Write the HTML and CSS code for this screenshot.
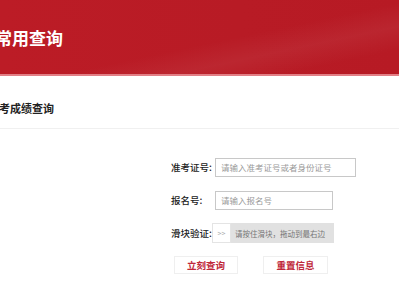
FILE: index.html
```html
<!DOCTYPE html>
<html lang="zh-CN">
<head>
<meta charset="utf-8">
<title>常用查询</title>
<link rel="stylesheet" href="styles.css">
</head>
<body>
<header class="banner">
  <h1 class="banner-title">常用查询</h1>
</header>
<section class="panel">
  <h2 class="panel-title">考成绩查询</h2>
  <form class="form">
    <div class="row">
      <label class="label">准考证号:</label>
      <input class="input input-wide" type="text" placeholder="请输入准考证号或者身份证号">
    </div>
    <div class="row">
      <label class="label">报名号:</label>
      <input class="input input-mid" type="text" placeholder="请输入报名号">
    </div>
    <div class="row">
      <label class="label">滑块验证:</label>
      <div class="slider">
        <span class="slider-handle">&gt;&gt;</span>
        <span class="slider-text">请按住滑块，拖动到最右边</span>
      </div>
    </div>
    <div class="actions">
      <button class="btn" type="button">立刻查询</button>
      <button class="btn" type="button">重置信息</button>
    </div>
  </form>
</section>
</body>
</html>
```

FILE: styles.css
```css
* { box-sizing: border-box; }
html, body { margin: 0; padding: 0; background: #fff; }
body {
  font-family: "Noto Sans CJK SC", "Noto Sans", sans-serif;
  color: #333;
  overflow: hidden;
  width: 399px;
  height: 300px;
}
.banner {
  height: 76px;
  padding-top: 28px;
  background:
    linear-gradient(168deg, rgba(255,255,255,0) 55%, rgba(255,255,255,0.05) 70%, rgba(255,255,255,0) 85%),
    linear-gradient(90deg, #bc1c26 0%, #b81b25 60%, #b71a24 100%);
  border-bottom: 2px solid #e27f86;
}
.banner-title {
  margin: 0 0 0 -5px;
  font-size: 17px;
  line-height: 19px;
  font-weight: 700;
  color: #fff;
  letter-spacing: 0;
}
.panel-title {
  margin: 0;
  padding: 26px 0 14px 0;
  margin-left: -1px;
  font-size: 11px;
  line-height: 12px;
  font-weight: 700;
  color: #222;
  border-bottom: 1px solid #f0f0f0;
}
.form {
  padding: 28px 0 0 171px;
}
.row {
  display: flex;
  align-items: center;
  height: 20px;
  margin-bottom: 13px;
}
.label {
  width: 44px;
  font-size: 9.5px;
  font-weight: 500;
  color: #222;
  white-space: nowrap;
}
.input {
  height: 19px;
  border: 1px solid #c8c8c8;
  padding: 0 0 0 5px;
  font-family: inherit;
  font-size: 8.5px;
  color: #333;
  outline: none;
  background: #fff;
}
.input::placeholder { color: #9a9a9a; }
.input-wide { width: 141px; }
.input-mid { width: 118px; }
.slider {
  margin-left: -3px;
  width: 122px;
  height: 20px;
  background: #e1e1e1;
  display: flex;
  align-items: center;
}
.slider-handle {
  width: 19px;
  height: 20px;
  background: #fff;
  border: 1px solid #e4e4e4;
  color: #aaa;
  font-size: 7px;
  display: flex;
  align-items: center;
  justify-content: center;
}
.slider-text {
  margin-left: 4px;
  font-size: 7.5px;
  color: #777;
  white-space: nowrap;
}
.actions {
  display: flex;
  gap: 25px;
  padding-left: 3px;
}
.btn {
  width: 64px;
  height: 18px;
  padding: 0;
  background: #fff;
  border: 1px solid #efefef;
  color: #c0283a;
  font-family: inherit;
  font-size: 9.5px;
  font-weight: 700;
  cursor: pointer;
}
.btn + .btn { width: 65px; }
```
